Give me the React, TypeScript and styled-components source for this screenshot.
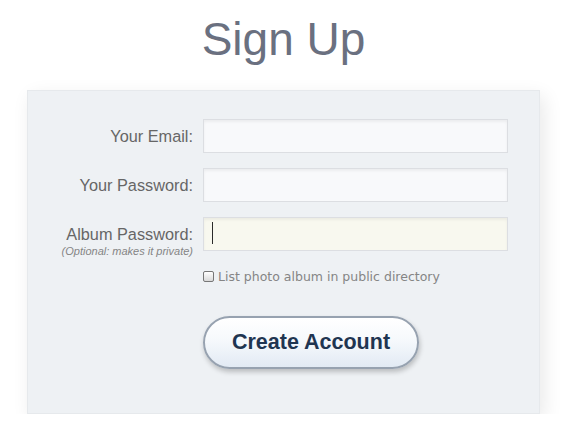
import React from 'react'
import styled, { createGlobalStyle } from 'styled-components'

const GlobalStyle = createGlobalStyle`
  html, body {
    margin: 0;
    padding: 0;
    background: #ffffff;
  }
  body {
    font-family: "Liberation Sans", Arial, Helvetica, sans-serif;
  }
`

const Page = styled.div`
  width: 513px;
  margin-left: 27px;
  padding-top: 16px;
`

const Title = styled.h1`
  margin: 0;
  font-size: 46px;
  line-height: 46px;
  font-weight: normal;
  color: #6a7080;
  text-align: center;
`

const Panel = styled.div`
  margin-top: 28px;
  height: 324px;
  box-sizing: border-box;
  padding-top: 28px;
  background: #eef1f4;
  border: 1px solid #e6e9ec;
  box-shadow: 4px 6px 18px rgba(0, 0, 0, 0.09);
`

const Form = styled.form`
  display: grid;
  grid-template-columns: 165px 305px;
  column-gap: 10px;
  row-gap: 15px;
  margin: 0;
`

const LabelCell = styled.div`
  display: flex;
  flex-direction: column;
  align-items: flex-end;
  height: 34px;
  box-sizing: border-box;
  padding-top: 8px;
`

const Label = styled.label`
  font-size: 16.3px;
  line-height: 18px;
  color: #666;
  white-space: nowrap;
`

const Note = styled.span`
  margin-top: 2px;
  font-size: 11px;
  font-style: italic;
  color: #858585;
  white-space: nowrap;
`

const FieldWrap = styled.div`
  position: relative;
  height: 34px;
`

const Input = styled.input<{ $focused?: boolean }>`
  display: block;
  width: 100%;
  height: 34px;
  box-sizing: border-box;
  margin: 0;
  padding: 4px 8px;
  border: 1px solid #dcdee2;
  outline: none;
  background: ${(p) => (p.$focused ? '#f8f8ef' : '#f8f9fb')};
  box-shadow: inset 0 2px 3px rgba(0, 0, 0, 0.05);
  font-size: 16px;
`

const Caret = styled.span`
  position: absolute;
  left: 9px;
  top: 5px;
  width: 1px;
  height: 22px;
  background: #2a2a2a;
`

const CheckRow = styled.div`
  grid-column: 2;
  display: flex;
  align-items: center;
  gap: 4px;
  margin-top: 3px;
`

const CheckBox = styled.input`
  appearance: none;
  margin: 0;
  width: 11px;
  height: 11px;
  box-sizing: border-box;
  border: 1px solid #777;
  border-radius: 2px;
  background: linear-gradient(#ffffff, #d9d9d9);
`

const CheckText = styled.label`
  font-family: "DejaVu Sans", Verdana, sans-serif;
  font-size: 12.5px;
  color: #858585;
`

const ButtonRow = styled.div`
  grid-column: 2;
  margin-top: 17px;
`

const Button = styled.button`
  width: 216px;
  height: 53px;
  box-sizing: border-box;
  border: 2px solid #97a2b0;
  border-radius: 27px;
  background: linear-gradient(#ffffff 0%, #f6f9fc 45%, #e2eaf4 100%);
  box-shadow: 1px 3px 5px rgba(0, 0, 0, 0.22), inset 0 1px 0 #fff;
  font-family: "Liberation Sans", Arial, sans-serif;
  font-size: 21.5px;
  font-weight: bold;
  color: #1f3551;
  cursor: pointer;
  padding: 0;
`

export default function App() {
  return (
    <>
      <GlobalStyle />
      <Page>
        <Title>Sign Up</Title>
        <Panel>
          <Form onSubmit={(e) => e.preventDefault()}>
            <LabelCell>
              <Label htmlFor="email">Your Email:</Label>
            </LabelCell>
            <FieldWrap>
              <Input id="email" type="text" />
            </FieldWrap>

            <LabelCell>
              <Label htmlFor="password">Your Password:</Label>
            </LabelCell>
            <FieldWrap>
              <Input id="password" type="password" />
            </FieldWrap>

            <LabelCell>
              <Label htmlFor="album">Album Password:</Label>
              <Note>(Optional: makes it private)</Note>
            </LabelCell>
            <FieldWrap>
              <Input id="album" type="password" $focused />
              <Caret />
            </FieldWrap>

            <CheckRow>
              <CheckBox id="public" type="checkbox" />
              <CheckText htmlFor="public">List photo album in public directory</CheckText>
            </CheckRow>

            <ButtonRow>
              <Button type="submit">Create Account</Button>
            </ButtonRow>
          </Form>
        </Panel>
      </Page>
    </>
  )
}
